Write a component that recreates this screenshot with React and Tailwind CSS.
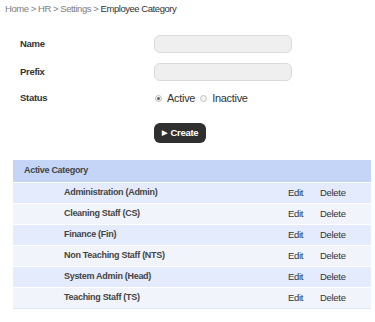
const categories = [
  "Administration (Admin)",
  "Cleaning Staff (CS)",
  "Finance (Fin)",
  "Non Teaching Staff (NTS)",
  "System Admin (Head)",
  "Teaching Staff (TS)",
];

function Field({ label, height = "h-[28px]", children }) {
  return (
    <div className={`flex items-center ${height}`}>
      <div className="w-[154px] pl-[20px] text-[9.5px] font-bold tracking-[-0.3px] text-[#333]">{label}</div>
      {children}
    </div>
  );
}

export default function App() {
  return (
    <div className="h-[322px] w-[375px] overflow-hidden bg-white font-['Liberation_Sans',Arial,sans-serif]">
      {/* Breadcrumb */}
      <div className="pl-[5px] pt-[2px] text-[9.5px] leading-[14px] tracking-[-0.45px] text-[#808080]">
        Home &gt; HR &gt; Settings &gt; <span className="text-[#333]">Employee Category</span>
      </div>

      {/* Form */}
      <div className="mt-[14px] flex flex-col">
        <Field label="Name">
          <div className="h-[18px] w-[138px] rounded-[6px] border border-[#dadada] bg-[#efefef]" />
        </Field>
        <Field label="Prefix">
          <div className="h-[18px] w-[138px] rounded-[6px] border border-[#dadada] bg-[#efefef]" />
        </Field>
        <Field label="Status" height="h-[24px]">
          <div className="flex items-center text-[11px] tracking-[-0.3px] text-[#333]">
            <span className="ml-[1px] flex h-[7px] w-[7px] items-center justify-center rounded-full border border-[#bbb] bg-[#f4f4f4]">
              <span className="h-[3px] w-[3px] rounded-full bg-[#666]" />
            </span>
            <span className="ml-[5px]">Active</span>
            <span className="ml-[5px] h-[7px] w-[7px] rounded-full border border-[#c4c4c4] bg-[#f4f4f4]" />
            <span className="ml-[5px]">Inactive</span>
          </div>
        </Field>
      </div>

      <div className="mt-[13px] pl-[154px]">
        <button className="flex h-[20px] w-[52px] items-center justify-center gap-[4px] rounded-[6px] bg-[#2f2f2f] text-[9.5px] font-bold tracking-[-0.3px] text-white">
          <span className="text-[7px]">▶</span>Create
        </button>
      </div>

      {/* Table */}
      <div className="mx-[13px] mt-[17px] w-[358px] border-b border-[#dfe6f5]">
        <div className="flex h-[22px] items-center bg-[#c5d5f8] pl-[11px] text-[9px] font-bold tracking-[-0.3px] text-[#444]">
          Active Category
        </div>
        {categories.map((c, i) => (
          <div
            key={c}
            className={`flex h-[21px] items-center border-t border-white tracking-[-0.3px] ${
              i % 2 === 0 ? "bg-[#e3ebfd]" : "bg-[#f2f4fb]"
            }`}
          >
            <div className="w-[275px] pl-[51px] text-[9px] font-bold text-[#444]">{c}</div>
            <div className="w-[32px] text-[9.5px] text-[#333]">Edit</div>
            <div className="text-[9.5px] text-[#333]">Delete</div>
          </div>
        ))}
      </div>
    </div>
  );
}
